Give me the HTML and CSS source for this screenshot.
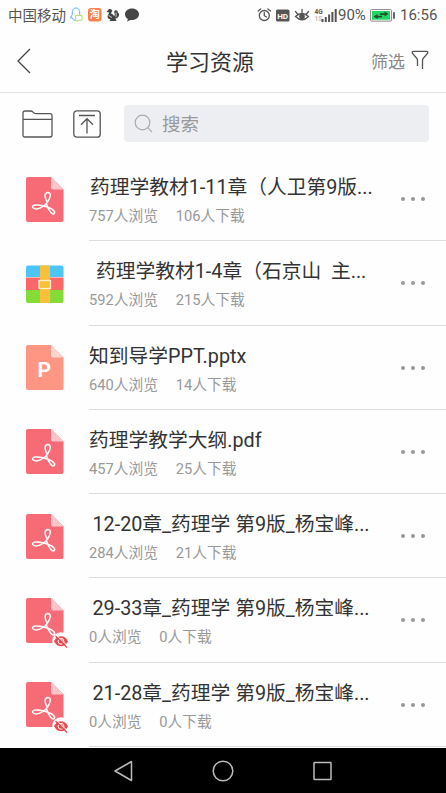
FILE: index.html
```
<!DOCTYPE html>
<html lang="zh-CN">
<head>
<meta charset="utf-8">
<title>学习资源</title>
<link rel="stylesheet" href="styles.css">
</head>
<body>
<svg class="defs" aria-hidden="true">
  <symbol id="pdf" viewBox="0 0 46 46">
    <path d="M2 0H25L37.5 12.5V43q0 2-2 2H2q-2 0-2-2V2Q0 0 2 0Z" fill="#f76b77"/>
    <path d="M25 0L37.5 12.5H27q-2 0-2-2Z" fill="#fcc5ca"/>
    <path d="M21.500 25.500C18.500 21 18 16 21.700 15.600C25.800 15.500 24.500 21 21.300 25.300C18 30.500 10 34 6.700 30.400C5.500 27.500 12 27.500 17 28.800C22 30 29 32 28.600 36C27 39.500 22.500 33.500 20.700 27.500" fill="none" stroke="#fff" stroke-width="1.500" stroke-linecap="round" stroke-linejoin="round"/>
  </symbol>
  <symbol id="hidden-eye" viewBox="0 0 18 18">
    <circle cx="9" cy="9" r="8.700" fill="#fff"/>
    <path d="M2 9.300Q4.500 4.300 9 4.300T16 9.300Q13.500 14.300 9 14.300T2 9.300Z" fill="#e94a50"/>
    <circle cx="9" cy="9.300" r="2.900" fill="none" stroke="#fff" stroke-width="1"/>
    <path d="M4.500 3.300L16 14.300" stroke="#fff" stroke-width="1"/>
    <path d="M3.500 4L15 15.500" stroke="#e94a50" stroke-width="1.300"/>
  </symbol>
  <symbol id="dots" viewBox="0 0 26 6">
    <g fill="#999"><circle cx="3" cy="3" r="2"/><circle cx="13" cy="3" r="2"/><circle cx="23" cy="3" r="2"/></g>
  </symbol>
</svg>
<div class="screen">
  <div class="status">
    <span class="carrier">中国移动</span>
    <svg class="notices" viewBox="0 0 70 16" width="70" height="16">
      <path d="M3.300 7.500C3 3 4.500 1 7 1S11 3 10.700 7.500L12.300 11L10.500 10.800Q9.500 13.300 6.500 13.300Q4 13.300 3.300 10.800L1.500 11Z" fill="#fff" stroke="#58b4f5"/>
      <path d="M6.500 8.500h6.500v4.700H9.500l-1.500 1.300v-1.300H6.500Z" fill="#fff" stroke="#b3e26b"/>
      <rect x="19" y="1" width="13.500" height="13.500" rx="3" fill="#fa8149"/>
      <text class="app-mark" x="20.800" y="11.400">淘</text>
      <path d="M37.500 5L40 2Q42.500 1.500 43.300 3.500L42 6.500Q44 6.500 45 9Q46.500 8 45.500 6.500Q44.500 4 46.500 3.300Q49 3 48.800 5.500Q51 7 49.500 9.500Q48.500 11.500 46.500 11.500L47.500 14H40.500L41.500 12.500Q38.500 12 38.500 9L40.300 5.500Z" fill="#444"/>
      <path d="M39.500 8.500L43 10.500M47 5.500Q47.500 8 46.800 10" fill="none" stroke="#fff" stroke-width=".7"/>
      <path d="M63 1.500C67 1.500 70 4 70 7.200S67 13 63 13H61.500L58 14.500L59 12C57 11 56 9 56 7.200C56 4 59 1.500 63 1.500Z" fill="#454545"/>
    </svg>
    <svg class="signals" viewBox="0 0 82 18" width="82" height="18">
      <g fill="none" stroke="#555" stroke-width="1.300" stroke-linecap="round">
        <circle cx="7.300" cy="9.500" r="5"/>
        <path d="M7.300 6.500V9.700L9.500 11M1.200 5L3.700 3M10.900 3L13.400 5"/>
      </g>
      <rect x="19" y="3.500" width="13.500" height="12" rx="1.500" fill="#555"/>
      <text class="hd" x="20.200" y="12.500">HD</text>
      <g fill="none" stroke="#555" stroke-width="1.300" stroke-linecap="round">
        <path d="M38.500 10.500Q45 4.500 51.500 10.500Q45 17 38.500 10.500ZM45 6.800V3.500M40.500 8L38.500 5.500M49.500 8L51.500 5.500"/>
      </g>
      <circle cx="45" cy="10.500" r="2.800" fill="#555"/>
      <text class="net" x="57.500" y="7.800">4G</text>
      <text class="net faint" x="57.500" y="15">1S</text>
      <path d="M64.500 13h2v3h-2ZM67.800 11h2v5h-2ZM71.100 8.500h2v7.500h-2ZM74.400 6h2v10h-2ZM77.700 3h2v13h-2Z" fill="#555"/>
    </svg>
    <span class="percent">90%</span>
    <svg class="battery" viewBox="0 0 26 13" width="26" height="13">
      <rect x=".6" y=".6" width="21" height="11.500" rx="1" fill="#fff" stroke="#888"/>
      <rect x="2" y="2" width="18" height="8.700" fill="#20d765"/>
      <path d="M3.500 7.500L7.500 5V6.700H12V8.500H7.500V10ZM18.500 5L14.500 2.500V4.200H10V6H14.500V7.500Z" fill="#24522f"/>
      <rect x="23" y="3" width="2" height="7" rx="1" fill="#666"/>
    </svg>
    <span class="clock">16:56</span>
  </div>
  <div class="header">
    <svg class="back" viewBox="0 0 14 26" width="14" height="26"><path d="M13 1L1 13L13 25" fill="none" stroke="#444" stroke-width="1.300"/></svg>
    <h1>学习资源</h1>
    <div class="filter"><span>筛选</span>
      <svg viewBox="0 0 18 20" width="18" height="20"><path d="M6.500 16V10.500Q6.500 9 5.500 8L1.500 3.500Q.5 1.300 2.500 1.300H15.500Q17.500 1.300 16.500 3.500L12.500 8Q11.500 9 11.500 10.500V19" fill="none" stroke="#555" stroke-width="1.300"/></svg>
    </div>
  </div>
  <div class="toolbar">
    <svg class="folder" viewBox="0 0 31 28" width="31" height="28"><path d="M1 25V3Q1 1 3 1H8.500Q10 1 11 2.200Q12.200 3.700 14 3.700H28Q30 3.700 30 5.700V25Q30 27 28 27H3Q1 27 1 25ZM1 9.300H30" fill="none" stroke="#555" stroke-width="1.300"/></svg>
    <svg class="upload" viewBox="0 0 28 28" width="28" height="28"><g fill="none" stroke="#555" stroke-width="1.300"><rect x=".8" y=".8" width="26.400" height="26.400" rx="3"/><path d="M6 5.500H22M14 23.500V9M8 14.700L14 8.700L20 14.700"/></g></svg>
    <div class="search">
      <svg viewBox="0 0 19 19" width="19" height="19"><g fill="none" stroke="#aaa" stroke-width="1.200"><circle cx="8.500" cy="8.500" r="7.300"/><path d="M13.700 13.700L18 18"/></g></svg>
      <span>搜索</span>
    </div>
  </div>
  <div class="list">
    <div class="row"><div class="icon"><svg class="file"><use href="#pdf"/></svg></div><div class="body"><div class="text"><div class="name n1">药理学教材1-11章（人卫第9版...</div><div class="meta"><span>757人浏览</span><span>106人下载</span></div></div><svg class="more"><use href="#dots"/></svg></div></div>
    <div class="row"><div class="icon"><svg class="file" viewBox="0 0 46 46">
      <path d="M0 16V6.500q0-2 2-2H35.500q2 0 2 2V16Z" fill="#4cc5fc"/><path d="M0 16.500H37.500V29H0Z" fill="#fa6769"/><path d="M0 29H37.500V40q0 2-2 2H2q-2 0-2-2Z" fill="#86dc37"/><path d="M14 4.500H24V42H14Z" fill="#fbc03b"/><rect x="13" y="19.500" width="11.500" height="8" fill="#fbc03b" stroke="#fff1c9" stroke-width="1.300"/>
    </svg></div><div class="body"><div class="text"><div class="name n2">药理学教材1-4章（石京山&nbsp; 主...</div><div class="meta"><span>592人浏览</span><span>215人下载</span></div></div><svg class="more"><use href="#dots"/></svg></div></div>
    <div class="row"><div class="icon"><svg class="file" viewBox="0 0 46 46">
      <path d="M2 0H25L37.500 12.500V43q0 2-2 2H2q-2 0-2-2V2Q0 0 2 0Z" fill="#ff9683"/><path d="M25 0L37.500 12.500H27q-2 0-2-2Z" fill="#ffd5cd"/><text class="ppt" x="11.500" y="31.500">P</text>
    </svg></div><div class="body"><div class="text"><div class="name">知到导学PPT.pptx</div><div class="meta"><span>640人浏览</span><span>14人下载</span></div></div><svg class="more"><use href="#dots"/></svg></div></div>
    <div class="row"><div class="icon"><svg class="file"><use href="#pdf"/></svg></div><div class="body"><div class="text"><div class="name">药理学教学大纲.pdf</div><div class="meta"><span>457人浏览</span><span>25人下载</span></div></div><svg class="more"><use href="#dots"/></svg></div></div>
    <div class="row"><div class="icon"><svg class="file"><use href="#pdf"/></svg></div><div class="body"><div class="text"><div class="name n5">12-20章_药理学 第9版_杨宝峰...</div><div class="meta"><span>284人浏览</span><span>21人下载</span></div></div><svg class="more"><use href="#dots"/></svg></div></div>
    <div class="row"><div class="icon"><svg class="file"><use href="#pdf"/></svg><svg class="badge"><use href="#hidden-eye"/></svg></div><div class="body"><div class="text"><div class="name n5">29-33章_药理学 第9版_杨宝峰...</div><div class="meta"><span>0人浏览</span><span>0人下载</span></div></div><svg class="more"><use href="#dots"/></svg></div></div>
    <div class="row"><div class="icon"><svg class="file"><use href="#pdf"/></svg><svg class="badge"><use href="#hidden-eye"/></svg></div><div class="body"><div class="text"><div class="name n5">21-28章_药理学 第9版_杨宝峰...</div><div class="meta"><span>0人浏览</span><span>0人下载</span></div></div><svg class="more"><use href="#dots"/></svg></div></div>
  </div>
  <div class="navbar">
    <svg viewBox="0 0 20 22" width="20" height="22"><path d="M18.500 1.500V20.500L2 11Z" fill="none" stroke="#bbb" stroke-width="1.500" stroke-linejoin="round"/></svg>
    <svg viewBox="0 0 22 22" width="22" height="22"><circle cx="11" cy="11" r="9.800" fill="none" stroke="#bbb" stroke-width="1.500"/></svg>
    <svg viewBox="0 0 20 20" width="20" height="20"><rect x="1" y="1.500" width="17" height="17" rx=".5" fill="none" stroke="#bbb" stroke-width="1.500"/></svg>
  </div>
</div>
</body>
</html>
```
FILE: styles.css
```
* { box-sizing: border-box; }
body {
  margin: 0;
  background: #fefefe;
  color: #333;
  font-family: Roboto, "Noto Sans CJK SC", sans-serif;
}
svg { display: block; flex: none; }
.defs { display: none; }
.screen {
  width: 446px;
  height: 793px;
  overflow: hidden;
  display: flex;
  flex-direction: column;
}
.status {
  height: 30px;
  flex: none;
  display: flex;
  align-items: center;
  padding-left: 8px;
  color: #555;
  white-space: nowrap;
}
.carrier { width: 61px; padding-bottom: 2px; font-size: 14.5px; }
.app-mark { font-size: 10px; fill: #fff; font-weight: 700; }
.signals { margin-left: 118px; }
.hd { font: 700 8px Roboto, sans-serif; fill: #fff; }
.net { font: 700 6.5px Roboto, sans-serif; fill: #555; }
.faint { fill: #bbb; }
.percent { width: 32px; margin-left: -1px; padding-bottom: 1px; font-size: 15px; }
.battery { flex: none; }
.clock { margin-left: 4px; font-size: 15px; }
.header {
  height: 63px;
  flex: none;
  display: grid;
  grid-template-columns: 90px 1fr 90px;
  align-items: center;
  border-bottom: 1px solid #e3e3e3;
}
.back { margin-left: 17px; }
h1 {
  margin: 0;
  padding: 0 26px 2px 0;
  text-align: center;
  font-size: 22px;
  font-weight: 400;
}
.filter {
  display: flex;
  align-items: center;
  gap: 6px;
  margin-left: 15px;
  padding-bottom: 2px;
  color: #888;
  font-size: 17px;
}
.toolbar {
  height: 64px;
  flex: none;
  display: flex;
  align-items: center;
  padding: 0 17px 3px 22px;
}
.upload { margin-left: 20px; }
.search {
  flex: 1;
  height: 37px;
  margin-left: 23px;
  padding-left: 10px;
  display: flex;
  align-items: center;
  gap: 9px;
  border-radius: 4px;
  background: #edeef2;
  color: #999;
  font-size: 18.500px;
}
.search span { padding-bottom: 1px; }
.list { flex: none; height: 591px; overflow: hidden; }
.row { height: 84.250px; display: flex; }
.icon { position: relative; width: 89px; padding: 19.500px 0 0 26px; flex: none; }
.file { width: 46px; height: 46px; }
.badge { position: absolute; left: 52px; top: 54px; width: 18px; height: 18px; }
.ppt { font: 700 21px Roboto, sans-serif; fill: #fff; }
.body {
  flex: 1;
  min-width: 0;
  display: flex;
  border-bottom: 1px solid #ddd;
}
.text { flex: 1; min-width: 0; padding-top: 17px; white-space: nowrap; }
.name { height: 28px; line-height: 28px; font-size: 19.750px; }
.n1 { padding-left: 1px; }
.n2 { padding-left: 7px; }
.n5 { padding-left: 3.500px; }
.meta {
  display: flex;
  gap: 18px;
  margin-top: 4px;
  line-height: 20px;
  font-size: 14.700px;
  color: #999;
}
.more { width: 26px; height: 6px; margin: 39px 20px 0 0; }
.navbar {
  height: 45px;
  flex: none;
  display: flex;
  align-items: center;
  justify-content: center;
  gap: 79px;
  background: #000;
}
```
